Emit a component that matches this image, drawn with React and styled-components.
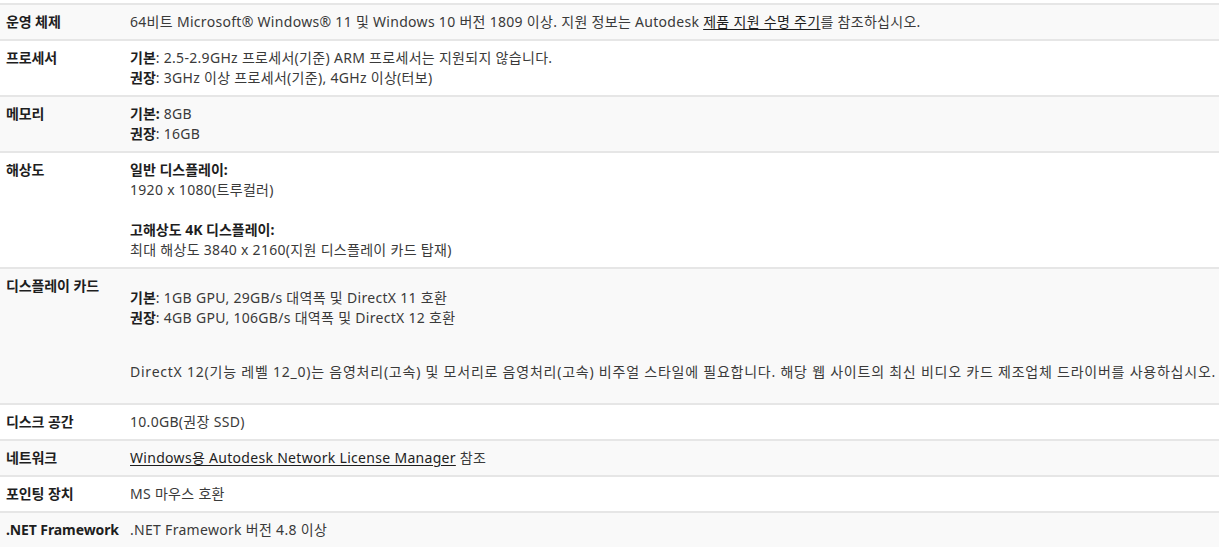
import React from 'react'
import styled, { createGlobalStyle } from 'styled-components'

const Global = createGlobalStyle`
  body {
    margin: 0;
    background: #fff;
    font-family: "Noto Sans", "Noto Sans CJK KR", sans-serif;
    font-size: 14px;
    color: #3a3a3a;
  }
`

const Table = styled.div`
  width: 1219px;
  padding-top: 3px;
`

const Row = styled.div`
  display: grid;
  grid-template-columns: 124px 1fr;
  padding: 7px 0 7px 6px;
  border-top: 2px solid #e6e6e6;
  background: ${props => props.shade ? '#f9f9f9' : '#fff'};
  line-height: 20px;
`

const Label = styled.div`
  font-weight: 700;
  color: #1e1e1e;
  height: 20px;
  letter-spacing: -0.1px;
`

const Value = styled.div`
  white-space: nowrap;
  letter-spacing: 0.3px;
`

const Para = styled.p`
  margin: ${props => props.top || 12}px 0 14px;
  ${props => props.wide && `
  letter-spacing: 0.77px;
  `}
`

const Strong = styled.b`
  font-weight: 700;
  color: #1e1e1e;
  letter-spacing: 0;
`

const Link = styled.a`
  color: #1e1e1e;
  text-decoration: underline;
  text-underline-offset: 2px;
`

const Gap = styled.div`
  height: 20px;
`

export default function App () {
  return (
    <Table>
      <Global />
      <Row shade>
        <Label>운영 체제</Label>
        <Value>64비트 Microsoft® Windows® 11 및 Windows 10 버전 1809 이상. 지원 정보는 Autodesk <Link>제품 지원 수명 주기</Link>를 참조하십시오.</Value>
      </Row>
      <Row>
        <Label>프로세서</Label>
        <Value>
          <div><Strong>기본</Strong>: 2.5-2.9GHz 프로세서(기준) ARM 프로세서는 지원되지 않습니다.</div>
          <div><Strong>권장</Strong>: 3GHz 이상 프로세서(기준), 4GHz 이상(터보)</div>
        </Value>
      </Row>
      <Row shade>
        <Label>메모리</Label>
        <Value>
          <div><Strong>기본:</Strong> 8GB</div>
          <div><Strong>권장</Strong>: 16GB</div>
        </Value>
      </Row>
      <Row>
        <Label>해상도</Label>
        <Value>
          <div><Strong>일반 디스플레이:</Strong></div>
          <div>1920 x 1080(트루컬러)</div>
          <Gap />
          <div><Strong>고해상도 4K 디스플레이:</Strong></div>
          <div>최대 해상도 3840 x 2160(지원 디스플레이 카드 탑재)</div>
        </Value>
      </Row>
      <Row shade>
        <Label>디스플레이 카드</Label>
        <Value>
          <Para>
            <Strong>기본</Strong>: 1GB GPU, 29GB/s 대역폭 및 DirectX 11 호환<br />
            <Strong>권장</Strong>: 4GB GPU, 106GB/s 대역폭 및 DirectX 12 호환
          </Para>
          <Para top={34} wide>DirectX 12(기능 레벨 12_0)는 음영처리(고속) 및 모서리로 음영처리(고속) 비주얼 스타일에 필요합니다. 해당 웹 사이트의 최신 비디오 카드 제조업체 드라이버를 사용하십시오.</Para>
        </Value>
      </Row>
      <Row>
        <Label>디스크 공간</Label>
        <Value>10.0GB(권장 SSD)</Value>
      </Row>
      <Row shade>
        <Label>네트워크</Label>
        <Value><Link>Windows용 Autodesk Network License Manager</Link> 참조</Value>
      </Row>
      <Row>
        <Label>포인팅 장치</Label>
        <Value>MS 마우스 호환</Value>
      </Row>
      <Row shade>
        <Label>.NET Framework</Label>
        <Value>.NET Framework 버전 4.8 이상</Value>
      </Row>
    </Table>
  )
}
